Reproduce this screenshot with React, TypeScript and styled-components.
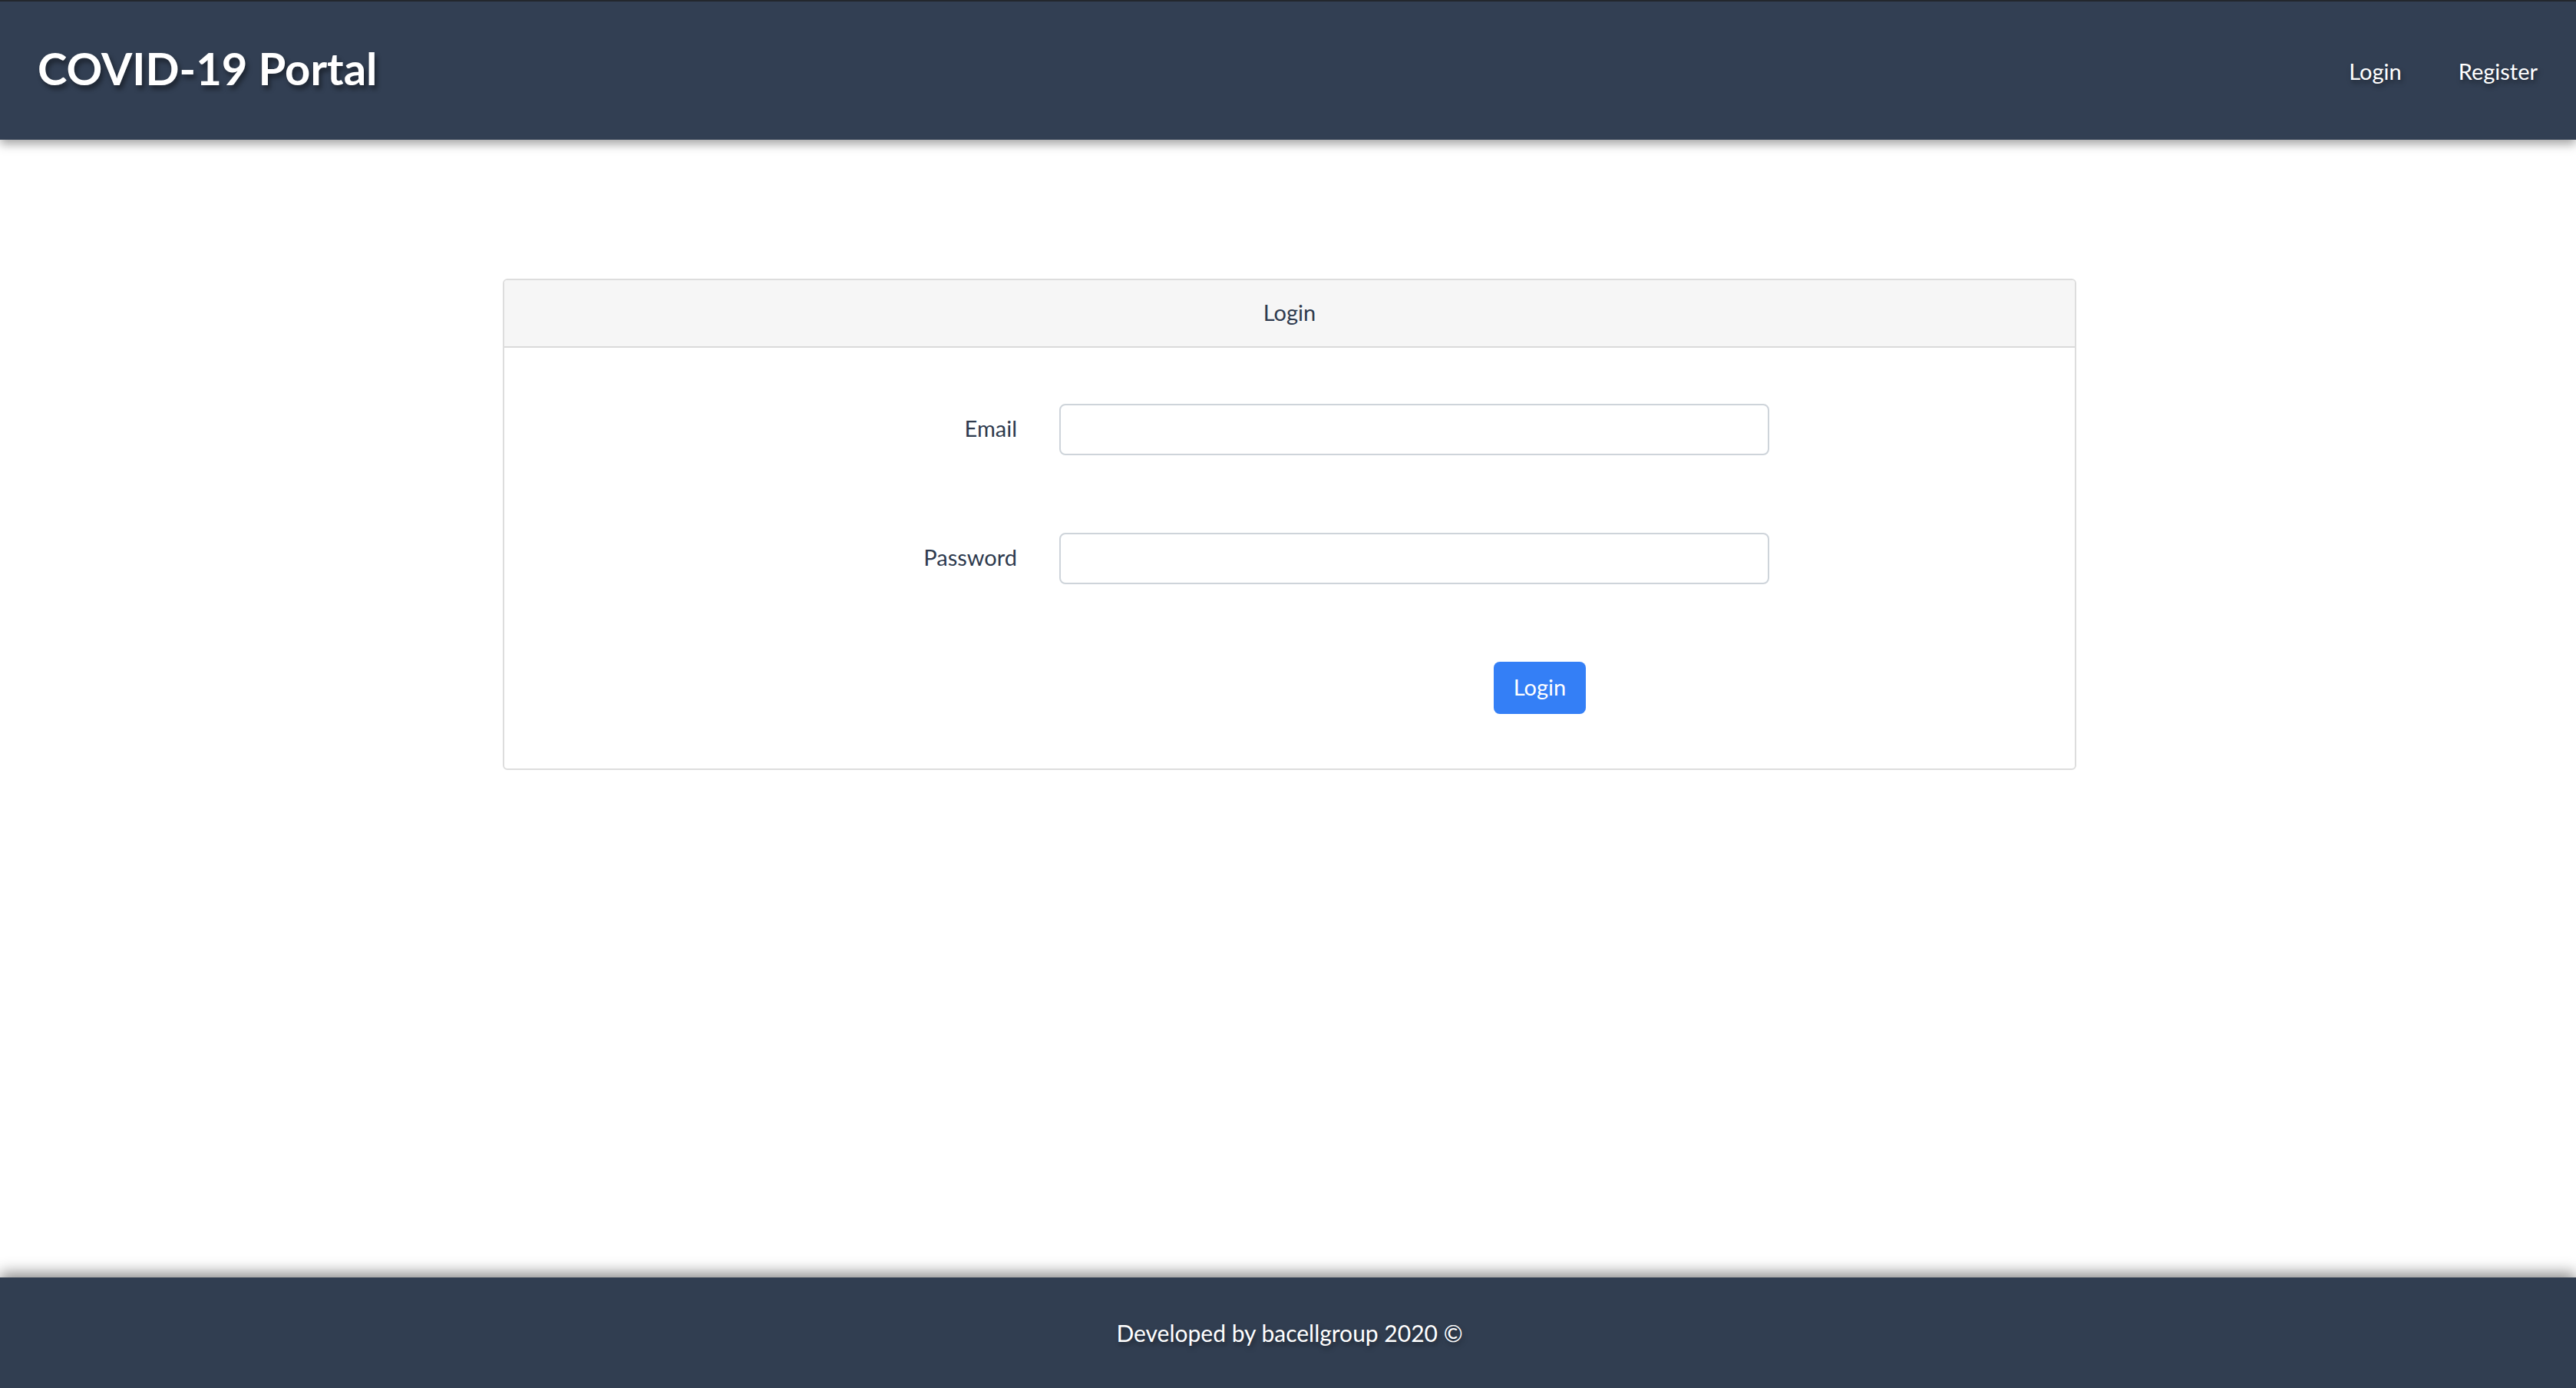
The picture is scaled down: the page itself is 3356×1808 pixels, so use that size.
import styled, { createGlobalStyle } from "styled-components";

const GlobalStyle = createGlobalStyle`
    html, body {
        margin: 0;
        padding: 0;
        background: #FFFFFF;
        font-family: Lato, "Open Sans", sans-serif;
    }
    * {
        box-sizing: border-box;
    }
`;

const Page = styled.div`
    min-height: 100vh;
    display: flex;
    flex-direction: column;
`;

const Nav = styled.header`
    height: 182px;
    background-color: #323F53;
    border-top: 2px solid #23272D;
    display: flex;
    align-items: center;
    justify-content: space-between;
    padding: 0 50px 0 49px;
    box-shadow: 0 6px 12px rgba(0, 0, 0, 0.35);
    position: relative;
    z-index: 1;
`;

const Brand = styled.h1`
    margin: 0;
    padding-bottom: 6px;
    color: #FFFFFF;
    font-size: 58px;
    font-weight: 700;
    line-height: 1.2;
    text-shadow: 3px 5px 6px rgba(0, 0, 0, 0.45);
`;

const NavLinks = styled.nav`
    display: flex;
    gap: 74px;
`;

const NavLink = styled.a`
    color: #FFFFFF;
    font-size: 29px;
    text-decoration: none;
    cursor: pointer;
    text-shadow: 2px 4px 6px rgba(0, 0, 0, 0.4);
`;

const Main = styled.main`
    flex: 1;
    display: flex;
    justify-content: center;
    padding: 181px 0 0 4px;
`;

const Card = styled.section`
    width: 2050px;
    align-self: flex-start;
    border: 2px solid #DDDDDD;
    border-radius: 6px;
    overflow: hidden;
`;

const CardHeader = styled.div`
    height: 88px;
    background-color: #F6F6F6;
    border-bottom: 2px solid #DADADA;
    display: flex;
    align-items: center;
    justify-content: center;
    padding-bottom: 3px;
    color: #2E3A4E;
    font-size: 29px;
`;

const CardBody = styled.form`
    display: flex;
    flex-direction: column;
    gap: 101px;
    padding: 73px 0 71px;
`;

const FormRow = styled.div`
    display: grid;
    grid-template-columns: 668px 925px;
    column-gap: 55px;
    align-items: center;
`;

const Label = styled.label`
    text-align: right;
    padding-bottom: 5px;
    color: #2E3A4E;
    font-size: 29px;
`;

const Input = styled.input`
    height: 67px;
    width: 100%;
    border: 2px solid #CED4DA;
    border-radius: 8px;
    background: #FFFFFF;
    padding: 0 22px;
    font-size: 29px;
    font-family: inherit;
    outline: none;
`;

const SubmitButton = styled.button`
    grid-column: 2;
    justify-self: start;
    margin-left: 566px;
    height: 68px;
    width: 120px;
    border: none;
    border-radius: 8px;
    background-color: #347FF6;
    color: #FFFFFF;
    font-size: 29px;
    font-family: inherit;
    cursor: pointer;
    padding: 0 0 3px;
`;

const Footer = styled.footer`
    height: 144px;
    background-color: #313E51;
    display: flex;
    align-items: center;
    justify-content: center;
    padding-left: 4px;
    color: #FFFFFF;
    font-size: 30px;
    box-shadow: 0 -6px 18px rgba(0, 0, 0, 0.45);
    text-shadow: 2px 4px 6px rgba(0, 0, 0, 0.35);
`;

export default function App() {
    return (
        <Page>
            <GlobalStyle />
            <Nav>
                <Brand>COVID-19 Portal</Brand>
                <NavLinks>
                    <NavLink>Login</NavLink>
                    <NavLink>Register</NavLink>
                </NavLinks>
            </Nav>
            <Main>
                <Card>
                    <CardHeader>Login</CardHeader>
                    <CardBody onSubmit={(e) => e.preventDefault()}>
                        <FormRow>
                            <Label htmlFor="email">Email</Label>
                            <Input id="email" type="email" />
                        </FormRow>
                        <FormRow>
                            <Label htmlFor="password">Password</Label>
                            <Input id="password" type="password" />
                        </FormRow>
                        <FormRow>
                            <SubmitButton type="submit">Login</SubmitButton>
                        </FormRow>
                    </CardBody>
                </Card>
            </Main>
            <Footer>Developed by bacellgroup 2020 ©</Footer>
        </Page>
    );
}
